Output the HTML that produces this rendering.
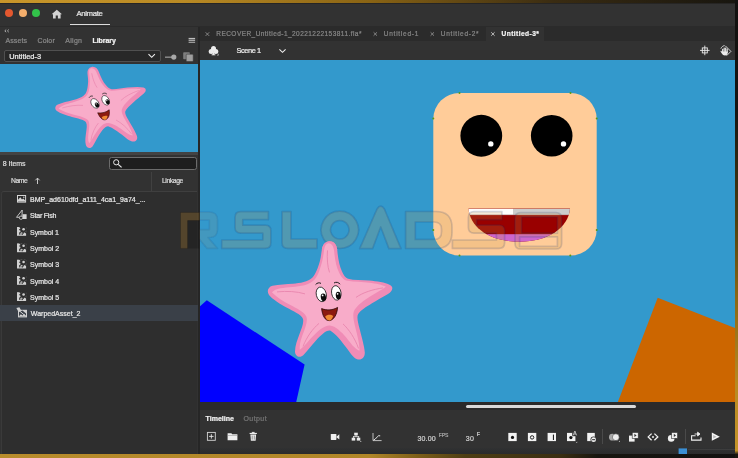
<!DOCTYPE html>
<html>
<head>
<meta charset="utf-8">
<style>
*{margin:0;padding:0;box-sizing:border-box}
html,body{width:738px;height:458px;overflow:hidden;background:#1b1a17}
body{font-family:"Liberation Sans",sans-serif;position:relative}
.abs{position:absolute}
.t{position:absolute;white-space:pre;line-height:1;-webkit-text-stroke:0.22px currentColor}
#txt{left:0;top:0;width:738px;height:458px;will-change:transform}
svg{position:absolute;overflow:visible}
#topband{left:0;top:0;width:738px;height:3px;background:linear-gradient(90deg,#c8962a 0%,#b98a24 25%,#8a6414 50%,#3a2c12 75%,#17150f 100%)}
#botband{left:0;top:454px;width:738px;height:4px;background:linear-gradient(90deg,#b88c2c 0%,#b08628 50%,#7a5c18 57%,#4e3e14 63%,#3a2e12 76%,#17150f 81%,#121110 100%)}
#rightband{left:735px;top:0;width:3px;height:458px;background:linear-gradient(180deg,#121110 0%,#151310 24%,#4e3f10 48%,#8a6716 65%,#b88a22 84%,#c4942a 98.4%,#1a1710 99.2%)}
#titlebar{left:0;top:3px;width:735px;height:24px;background:#323232;border-top:1px solid #262524}
.tl{width:8px;height:8px;border-radius:50%;top:8.5px}
#titleul{left:70px;top:23.6px;width:40px;height:1px;background:#dcdcdc}
#tabline{left:0;top:26px;width:735px;height:1px;background:#2b2b2b}
#tabbar{left:200px;top:27px;width:535px;height:14px;background:#2b2b2b}
#acttab{left:486px;top:27px;width:58px;height:14px;background:#323232}
#scenebar{left:200px;top:41px;width:535px;height:19px;background:#323232}
#stage{left:200px;top:60px;width:535px;height:342px;background:#3399cc;overflow:hidden}
#panel{left:0;top:27px;width:198px;height:427px;background:#323232}
#gap{left:198px;top:27px;width:2px;height:427px;background:#262626}
#dd{left:3.5px;top:50.3px;width:157px;height:11.6px;border:1px solid #505050;border-radius:2px;background:#282828}
#preview{left:0;top:63.7px;width:198px;height:88px;background:#3399cc;overflow:hidden}
#search{left:108.5px;top:157.3px;width:88px;height:12.4px;border:1px solid #6c6c6c;border-radius:2.5px;background:#1e1e1e}
#hdrtop{left:0;top:151.7px;width:198px;height:3.8px;background:#434343}
#hdrdiv{left:151px;top:172px;width:1px;height:19px;background:#414141}
#list{left:1px;top:191px;width:196px;height:263px;background:#2e2e2e;border-top:1px solid #3f3f3f;border-left:1px solid #3a3a3a;border-top-left-radius:3px}
#sel{left:0px;top:305.4px;width:198px;height:15.2px;background:#3a4048}
#tlscroll{left:200px;top:402px;width:535px;height:8.3px;background:#2a2a2a}
#tlthumb{left:466px;top:405.3px;width:170px;height:3.2px;border-radius:2px;background:#d9d9d9}
#timeline{left:200px;top:410.3px;width:535px;height:43.7px;background:#323232}
#tlbot{left:200px;top:447.5px;width:535px;height:6.5px;background:linear-gradient(180deg,#303132,#2a2b2c)}
.vdiv{width:1px;top:428.5px;height:15px;background:#4a4a4a}
</style>
</head>
<body>
<div id="titlebar" class="abs"></div>
<div class="abs tl" style="left:5.4px;background:#e4582f"></div>
<div class="abs tl" style="left:18.8px;background:#f4ae6c"></div>
<div class="abs tl" style="left:31.8px;background:#32c24a"></div>
<div id="titleul" class="abs"></div>
<div id="tabline" class="abs"></div>
<div id="tabbar" class="abs"></div>
<div id="acttab" class="abs"></div>
<div id="scenebar" class="abs"></div>
<div id="stage" class="abs">
<svg class="abs" style="left:0;top:0" width="535" height="342" viewBox="200 60 535 342">
<defs>
<symbol id="star" viewBox="0 0 126 120" overflow="visible">
<path d="M62.4 0.8 C67.5 0.5 70 5 70.3 10 C71 18 72.5 26 75 31 C76.5 34.5 78.5 37.5 81 38.3 C87 40 95 39.5 102 40.2 C110 41 118 42 123 44.5 C127 46.5 125.5 51 121 53.5 C116 56.5 110 59.5 105 62.8 C99 66.5 93.5 70 91.2 73.5 C89.5 76.5 91 82 92.5 88 C94.5 96 97.5 106 97.8 112 C98 118 93.5 120.5 89.5 118.5 C85.5 116.5 83 112 80 108 C75 101.5 69 93.5 63.5 90.3 C59 89.5 54 95 49 100 C45 104 40.5 110.5 36.5 114.5 C33 118 28 116 28 111 C28 105 30.5 99 32.5 93.5 C34.5 88 37 82.5 36 78.5 C34.5 74 26 70.5 19.5 67 C13.5 63.8 5 58.5 2 54.5 C-0.5 51 1 46.5 5.5 45.3 C12 43.8 19.5 43.8 26 43.3 C33 42.8 41 41.8 45.5 37.2 C49 33.5 51 27 52.8 21.2 C54 17 54.3 12 55 8.5 C55.8 4 58.5 1 62.4 0.8 Z" fill="#f08cb6"/>
<path d="M62 3.5 C66 3.5 67.5 8 67.8 12 C68.5 20 70 28 73 33.5 C75 37.5 77.5 40.5 81 41 C88 42.3 96 42 103 43 C109 43.8 116 45 119.5 47 C115 50.5 107 54.5 101 58.5 C95 62.5 89.5 67 87.5 71.5 C86 75.5 87.5 82 89 88 C91 96 93.5 105 93 111 C88 109 84 103 80 98 C75 92 69 86.5 63.5 85.8 C58 85.5 52 91 47 96 C42.5 100.5 38 106.5 33.5 110 C32.5 105 35 98.5 37 93 C39 87.5 41.5 81.5 40 77 C38 72 30 68.5 23.5 65 C17.5 61.8 10 57.5 5.5 52.5 C9 48.5 18 47.8 26 47.2 C34 46.6 43 45.5 48 40 C52 35.5 54 28 55.8 21.5 C57 17 57.3 12 58 8.5 C58.6 5.5 60 3.6 62 3.5 Z" fill="#f8acc9" transform="translate(-0.6 -0.7)"/>
<path d="M60.5 10 C59.8 18 60.5 26 62.5 32" fill="none" stroke="#e986ae" stroke-width="0.9"/>
<path d="M10 51.5 C20 50.5 30 51 38 53.5" fill="none" stroke="#e986ae" stroke-width="0.9"/>
<path d="M116 47.5 C106 49 96 52 89 57" fill="none" stroke="#e986ae" stroke-width="0.9"/>
<path d="M36 106 C40 96 46 88 52 83" fill="none" stroke="#e986ae" stroke-width="0.9"/>
<path d="M91.5 108 C88 98 82 89 76 83.5" fill="none" stroke="#e986ae" stroke-width="0.9"/>
<ellipse cx="54.3" cy="54" rx="5" ry="7.4" fill="#fff" stroke="#1a1a1a" stroke-width="0.8" transform="rotate(-14 54.3 54)"/>
<ellipse cx="69.3" cy="52.5" rx="4.7" ry="7.3" fill="#fff" stroke="#1a1a1a" stroke-width="0.8" transform="rotate(-10 69.3 52.5)"/>
<ellipse cx="56.4" cy="56.8" rx="2.6" ry="3.8" fill="#0a0a0a" transform="rotate(-10 56.4 56.8)"/>
<ellipse cx="71.3" cy="55.2" rx="2.5" ry="3.8" fill="#0a0a0a" transform="rotate(-8 71.3 55.2)"/>
<circle cx="55.6" cy="55" r="0.9" fill="#fff"/>
<circle cx="70.6" cy="53.4" r="0.9" fill="#fff"/>
<path d="M48.6 44.2 C50 42.3 52.5 42 54 43" fill="none" stroke="#1a1a1a" stroke-width="1"/>
<path d="M67 42.6 C69 41.3 71.8 41.8 73 43.8" fill="none" stroke="#1a1a1a" stroke-width="1"/>
<path d="M54.6 68.2 C60 70.3 66 69.8 70.6 67 C70 74 67 79.5 62.5 80.2 C58 80.6 55.4 75 54.6 68.2 Z" fill="#8c1a10" stroke="#2a0806" stroke-width="0.8"/>
<path d="M58.2 76.2 C60 74 64 73.8 66.2 75.6 C65.3 78.3 64 79.9 62.5 80.2 C60.8 80.4 59.2 78.8 58.2 76.2 Z" fill="#ee8a34"/>
</symbol>
</defs>
<polygon points="199,307 206.8,300.3 304.6,364.6 296,403 199,403" fill="#0000ff"/>
<polygon points="657.7,297.8 736,328.3 736,403 617.5,403" fill="#cc6600"/>
<rect x="433.3" y="92.9" width="163.4" height="162.7" rx="26" ry="26" fill="#ffcc99"/>
<circle cx="481.3" cy="135.75" r="20.9" fill="#000"/>
<circle cx="551.7" cy="135.75" r="20.8" fill="#000"/>
<circle cx="490.8" cy="143.9" r="2.7" fill="#fff"/>
<circle cx="563.5" cy="143.9" r="2.7" fill="#fff"/>
<clipPath id="mclip"><path d="M468.5 208.6 H570 C568.5 228 548 241.8 519.2 241.8 C490.4 241.8 470 228 468.5 208.6 Z"/></clipPath>
<g clip-path="url(#mclip)">
<rect x="460" y="205" width="120" height="45" fill="#990000"/>
<rect x="460" y="234.2" width="120" height="12" fill="#cc66cc"/>
<rect x="460" y="208.6" width="53" height="6.4" fill="#ffffff"/>
<rect x="513" y="208.6" width="60" height="6.4" fill="#cccccc"/>
<rect x="460" y="214.2" width="120" height="1" fill="#b89a9a" opacity="0.6"/>
</g>
<g fill="#5c9a10"><circle cx="459.5" cy="92.9" r="1"/><circle cx="570.5" cy="92.9" r="1"/><circle cx="433.3" cy="118.5" r="1"/><circle cx="596.7" cy="118.5" r="1"/><circle cx="433.3" cy="230" r="1"/><circle cx="596.7" cy="230" r="1"/><circle cx="459.5" cy="255.6" r="1"/><circle cx="570.3" cy="255.6" r="1"/></g>
<use href="#star" x="267" y="240.4" width="126" height="120"/>
</svg>
</div>
<div id="panel" class="abs"></div>
<div id="gap" class="abs"></div>
<div id="dd" class="abs"></div>
<div id="preview" class="abs"><svg style="left:0;top:0" width="198" height="87" viewBox="0 0 198 87"><g transform="matrix(0.7293 -0.1399 0.1765 0.6651 45.86 11.10)"><use href="#star" x="0" y="0" width="126" height="120"/></g></svg></div>
<div id="search" class="abs"></div>
<div id="hdrtop" class="abs"></div>
<div id="hdrdiv" class="abs"></div>
<div id="list" class="abs"></div>
<div id="sel" class="abs"></div>
<div id="tlscroll" class="abs"></div>
<div id="tlthumb" class="abs"></div>
<div id="timeline" class="abs"></div>
<div id="tlbot" class="abs"></div>
<div class="abs vdiv" style="left:602px"></div>
<div class="abs vdiv" style="left:685px"></div>
<svg id="wm" style="left:0;top:0" width="738" height="458" viewBox="0 0 738 458">
<defs><filter id="wb" x="-5%" y="-20%" width="110%" height="140%"><feGaussianBlur stdDeviation="0.45"/></filter><clipPath id="cpL"><rect x="0" y="190" width="199.6" height="80"/></clipPath><clipPath id="cpR"><rect x="199.6" y="190" width="540" height="80"/></clipPath>
<g id="wmg" fill-rule="evenodd" stroke-linejoin="round">
<path d="M221.7 240 H262.8 V233.2 H240.6 Q235 233.2 235 227.6 V217.2 Q235 211.6 240.6 211.6 H268.4 V219.6 H242.8 V225.2 H265.3 Q270.9 225.2 270.9 230.8 V242.8 Q270.9 248.4 265.3 248.4 H221.7 Z"/>
<path d="M282 211.6 H291 V239 H317 V248.4 H287.6 Q282 248.4 282 242.8 Z"/>
<path d="M339.8 211.1 A18.7 18.7 0 1 1 339.79 211.1 Z M339.8 220.6 A9.2 9.2 0 1 0 339.81 220.6 Z"/>
<path d="M359.7 248.6 L377 209 Q380.7 203.4 384.4 209 L401 248.6 H388.9 L380.7 227 L372.6 248.6 Z"/>
<path d="M405.6 211.5 H436 Q452 211.5 452 227.5 V232.5 Q452 248.5 436 248.5 H405.6 Z M415.3 222 H434 Q441.5 222 441.5 229 V232 Q441.5 239.4 434 239.4 H415.3 Z"/>
<path d="M452.4 240 H496.4 V233.2 H474 Q468.4 233.2 468.4 227.6 V217.2 Q468.4 211.6 474 211.6 H502 V219.6 H476.6 V225.2 H499 Q504.6 225.2 504.6 230.8 V242.8 Q504.6 248.4 499 248.4 H452.4 Z"/>
<path d="M520.6 212.6 H556 Q561.6 212.6 561.6 218.2 V243.4 Q561.6 249 556 249 H520.6 Q515 249 515 243.4 V218.2 Q515 212.6 520.6 212.6 Z M521.6 217 V233.2 H557.4 V217 Z M519.6 236.8 V246.4 H557.4 V236.8 Z"/>
</g><g id="wmR" fill-rule="evenodd" stroke-linejoin="round"><path d="M180.5 212 H209 Q217.5 212 217.5 220 V229.5 Q217.5 237.5 209.5 237.5 H208 L217.5 248.4 H207 L198 237.5 H188.6 V248.4 H180.5 Z M188.6 220 H209.4 V229.6 H188.6 Z"/></g></defs>
<g clip-path="url(#cpL)"><path d="M180.5 212.4 H199.6 V220.6 H187.6 V248.4 H180.5 Z" fill="rgba(200,140,40,0.25)" stroke="rgba(0,0,0,0.2)" stroke-width="0.8"/><path d="M187.6 220.6 H199.6 V248.4 H187.6 Z" fill="rgba(0,0,0,0.2)"/></g>
<g clip-path="url(#cpR)" filter="url(#wb)"><use href="#wmg" fill="rgba(198,148,72,0.2)" stroke="rgba(10,50,110,0.17)" stroke-width="1.7"/><use href="#wmR" fill="rgba(198,148,72,0.11)" stroke="rgba(10,50,110,0.1)" stroke-width="1.7"/></g>
<clipPath id="cpT"><rect x="300" y="238" width="60" height="12"/></clipPath><g clip-path="url(#cpT)"><use href="#star" x="267" y="240.4" width="126" height="120"/></g>
</svg>

<svg id="icons" style="left:0;top:0" width="738" height="458" viewBox="0 0 738 458">
<!-- home -->
<path d="M56.8 9.8 L62 14.3 L60.6 14.3 L60.6 18.5 L57.9 18.5 L57.9 15.6 L55.7 15.6 L55.7 18.5 L53 18.5 L53 14.3 L51.6 14.3 Z" fill="#d2d2d2"/>
<!-- collapse chevrons -->
<path d="M6.2 29.6 L4.8 30.9 L6.2 32.2 M8.8 29.6 L7.4 30.9 L8.8 32.2" fill="none" stroke="#b4b4b4" stroke-width="0.9"/>
<!-- hamburger -->
<rect x="188.6" y="37.9" width="6.5" height="1.5" fill="#bdbdbd"/><rect x="188.6" y="40" width="6.5" height="1.2" fill="#a5a5a5"/><rect x="188.6" y="41.9" width="6.5" height="1" fill="#a5a5a5"/>
<!-- dropdown chevron -->
<path d="M148.5 54.2 L151.7 57.3 L154.9 54.2" fill="none" stroke="#f0f0f0" stroke-width="1.1"/>
<!-- pin -->
<rect x="165" y="56.6" width="7" height="1.1" fill="#a8a8a8"/><circle cx="173.8" cy="57.1" r="2.6" fill="#a8a8a8"/>
<!-- copy -->
<rect x="183.2" y="52.3" width="6.6" height="7" rx="0.8" fill="#7e7e7e"/><rect x="186.2" y="54.2" width="7" height="7.3" rx="0.8" fill="#9e9e9e" stroke="#323232" stroke-width="0.5"/>
<!-- search magnifier -->
<circle cx="116.2" cy="162.3" r="2.6" fill="none" stroke="#e8e8e8" stroke-width="1"/><path d="M118.2 164.4 L121.6 167.4" stroke="#e8e8e8" stroke-width="1.2" fill="none"/>
<!-- sort arrow -->
<path d="M37.5 184 L37.5 178.3 M35.4 180.3 L37.5 178.1 L39.6 180.3" fill="none" stroke="#d8d8d8" stroke-width="0.9"/>
<!-- list icons -->
<g id="bmpic"><rect x="17" y="195" width="9.1" height="7.6" fill="#d4d4d4"/><rect x="18" y="196" width="7.1" height="5.6" fill="#2a2a2a"/><path d="M18 201.6 L18 199.8 L20.3 197.3 L22 199.6 L23.3 198.6 L25.1 200.4 L25.1 201.6 Z" fill="#d4d4d4"/><circle cx="23.8" cy="197.2" r="0.7" fill="#d4d4d4"/></g>
<g id="gfxic"><path d="M22.2 210 L16.5 217.3 L22 217.3 Z" fill="none" stroke="#d4d4d4" stroke-width="0.9"/><rect x="22.6" y="214.2" width="4" height="4.8" fill="#d4d4d4"/><circle cx="21" cy="217.7" r="1.7" fill="#2e2e2e" stroke="#d4d4d4" stroke-width="0.8"/></g>
<g id="symic"><rect x="17" y="227" width="9.1" height="8.8" fill="#d0d0d0"/><circle cx="23.2" cy="229.6" r="3.1" fill="#2e2e2e"/><path d="M19.5 226.5 L26.8 233.5 M26.6 226.3 L20.2 232.6 M23.2 225.6 L23.2 233.8 M19.2 229.6 L27.2 229.6" stroke="#2e2e2e" stroke-width="1.1"/><circle cx="23.6" cy="229.3" r="1.3" fill="#d0d0d0"/><rect x="19.2" y="232.3" width="1.2" height="2.4" fill="#2e2e2e"/><rect x="21.6" y="233.3" width="1.2" height="1.6" fill="#2e2e2e"/></g>
<use href="#symic" y="16.4"/><use href="#symic" y="32.7"/><use href="#symic" y="49"/><use href="#symic" y="65.2"/>
<g id="warpic"><rect x="18" y="309.8" width="9" height="7.6" fill="#d0d0d0"/><path d="M19 316.2 L19 312 L22.5 310.6 L26 313.4 L26 316.2 Z" fill="#3a4048"/><path d="M19 316.3 L20.8 314.2 L22.6 315.4 L24.4 314 L26 316.3 Z" fill="#d0d0d0"/><path d="M16.4 308 L19.4 307.2 L21.2 310.6 L18.4 311.8 Z" fill="#d0d0d0"/><path d="M19.6 311 L26 316.4" stroke="#d0d0d0" stroke-width="1"/></g>
<!-- tab x's -->
<g stroke="#9a9a9a" stroke-width="0.8" fill="none"><path d="M205.6 32.3 L209.2 35.9 M209.2 32.3 L205.6 35.9"/><path d="M373.6 32.3 L377 35.7 M377 32.3 L373.6 35.7"/><path d="M430.6 32.3 L434 35.7 M434 32.3 L430.6 35.7"/></g>
<path d="M491.2 32.3 L494.6 35.7 M494.6 32.3 L491.2 35.7" stroke="#dcdcdc" stroke-width="0.8" fill="none"/>
<!-- club / scene icon -->
<g fill="#ececec"><circle cx="213.5" cy="48.6" r="2.5"/><circle cx="211.2" cy="51.6" r="2.5"/><circle cx="215.8" cy="51.6" r="2.5"/><path d="M213.5 50 L214.6 55 L212.4 55 Z"/><rect x="211.6" y="54.4" width="3.8" height="0.9"/><path d="M218.6 53.6 L218.6 55.4 L216.8 55.4 Z" fill="#bbb"/></g>
<!-- scene chevron -->
<path d="M279.4 49.3 L282.5 52.3 L285.6 49.3" fill="none" stroke="#ececec" stroke-width="1.1"/>
<!-- crosshair -->
<g stroke="#ececec" stroke-width="0.9" fill="none"><rect x="702.3" y="47.9" width="5" height="5"/><path d="M704.8 45.6 L704.8 55.2 M700 50.4 L709.6 50.4"/></g>
<!-- rotate-hand -->
<g><path d="M725.4 45.9 L730.9 51.4 L726.6 55.7" fill="none" stroke="#e6e6e6" stroke-width="0.9"/><path d="M720.9 48.6 C721.6 46.8 723 45.8 724.6 45.6" fill="none" stroke="#e6e6e6" stroke-width="0.9"/><g fill="#ececec"><rect x="722.1" y="48.7" width="1.15" height="4" rx="0.5"/><rect x="723.6" y="47.6" width="1.15" height="5" rx="0.5"/><rect x="725.1" y="47.5" width="1.15" height="5" rx="0.5"/><rect x="726.6" y="48.4" width="1.15" height="4.4" rx="0.5"/><path d="M722.1 51.4 H727.75 V52.6 C727.75 54.4 726.6 55.6 725 55.6 C723.4 55.6 722.6 54.8 721.8 53.6 L720.5 51.4 C720.3 50.8 721 50.4 721.4 50.9 L722.1 51.8 Z"/></g></g>
<!-- timeline left icons -->
<rect x="207.4" y="432.4" width="7.9" height="7.9" fill="none" stroke="#d6d6d6" stroke-width="0.9"/><path d="M211.35 434.2 L211.35 438.6 M209.1 436.4 L213.6 436.4" stroke="#e6e6e6" stroke-width="0.9"/>
<path d="M227.6 433.2 L231.4 433.2 L232.2 434.3 L237.4 434.3 L237.4 440.2 L227.6 440.2 Z" fill="#f0f0f0"/><rect x="227.6" y="435.1" width="9.8" height="0.5" fill="#8a8a8a"/>
<g fill="#ececec"><rect x="251.8" y="431.9" width="2.8" height="1"/><rect x="249.6" y="432.9" width="7.3" height="1.1"/><path d="M250.4 434.6 L256.1 434.6 L255.6 440.7 L250.9 440.7 Z"/></g><path d="M252.2 435.6 L252.2 439.6 M254.3 435.6 L254.3 439.6" stroke="#555" stroke-width="0.6"/>
<!-- camera, hierarchy, graph -->
<rect x="330.8" y="433.9" width="5.6" height="6" rx="0.6" fill="#f0f0f0"/><path d="M336.2 436.9 L339.3 434.3 L339.3 439.5 Z" fill="#f0f0f0"/>
<g fill="#ececec"><rect x="354.2" y="432.7" width="3.6" height="2.7"/><rect x="351.7" y="437.7" width="3.5" height="2.9"/><rect x="356.8" y="437.7" width="3.5" height="2.9"/><rect x="355.6" y="435.2" width="0.9" height="1.5"/><rect x="353" y="436.3" width="6.1" height="0.8"/><rect x="353" y="436.3" width="0.8" height="1.6"/><rect x="358.3" y="436.3" width="0.8" height="1.6"/><circle cx="360.8" cy="441.6" r="0.5"/></g>
<path d="M373 433 L373 440.6 L381.6 440.6" fill="none" stroke="#cfcfcf" stroke-width="0.9"/><path d="M373.6 440 C376 439.2 377 436.6 378.4 435.8 L380.2 435.8" fill="none" stroke="#e8e8e8" stroke-width="1"/>
<!-- keyframe icons -->
<g fill="#f2f2f2"><rect x="508.3" y="432.9" width="8.4" height="8.2"/><rect x="527.9" y="432.9" width="8.4" height="8.2"/><rect x="547.6" y="432.9" width="8.4" height="8.2"/><rect x="567" y="432.9" width="8.4" height="8.2"/><rect x="587.2" y="432.9" width="7.6" height="8.2"/></g>
<circle cx="512.5" cy="437.4" r="1.6" fill="#111"/>
<circle cx="532.1" cy="437.4" r="1.7" fill="none" stroke="#222" stroke-width="1"/>
<rect x="552.9" y="434.6" width="1.1" height="5.4" fill="#222"/>
<circle cx="570.9" cy="437.6" r="1.6" fill="#111"/>
<path d="M572.2 432.6 L577.6 432.6 L577.6 436.2 L572.2 436.2 Z" fill="#323232"/><path d="M573.2 435.4 L574.9 431 L576.6 435.4 M573.8 434 L576 434" fill="none" stroke="#e8e8e8" stroke-width="0.7"/>
<path d="M577.2 441.6 L577.2 443 L575.8 443 Z" fill="#bbb"/>
<circle cx="593.6" cy="439.7" r="3.1" fill="#323232"/><circle cx="593.6" cy="439.7" r="2.4" fill="#f2f2f2"/><rect x="592.1" y="439.2" width="3" height="1" fill="#222"/>
<!-- onion etc -->
<circle cx="612.4" cy="437.2" r="3.4" fill="#a8a8a8"/><circle cx="615.8" cy="437.2" r="3.4" fill="#ededed" stroke="#323232" stroke-width="0.5"/><path d="M620 440.6 L620 442 L618.6 442 Z" fill="#bbb"/>
<rect x="629" y="435.6" width="5.6" height="6" fill="#f0f0f0"/><rect x="632.2" y="432.5" width="6" height="5.8" fill="#f0f0f0" stroke="#323232" stroke-width="0.6"/><path d="M634.4 433.8 L636.6 435.4 L634.4 437 Z" fill="#323232"/>
<path d="M651.6 433.6 L648.2 436.9 L651.6 440.2 M654.4 433.6 L657.8 436.9 L654.4 440.2" fill="none" stroke="#f0f0f0" stroke-width="1.3"/><circle cx="653" cy="436.9" r="1" fill="#f0f0f0"/>
<circle cx="671.2" cy="438.4" r="3.3" fill="#f0f0f0"/><rect x="671.6" y="432.5" width="5.9" height="5.8" fill="#f0f0f0" stroke="#323232" stroke-width="0.6"/><path d="M673.8 433.8 L676 435.4 L673.8 437 Z" fill="#323232"/>
<path d="M695.6 435.8 L691.6 435.8 L691.6 440.1 L701 440.1 L701 437.4" fill="none" stroke="#f0f0f0" stroke-width="1.1"/><path d="M694.6 434 L698.4 434 M697.6 432.2 L700 434 L697.6 435.9 Z" fill="#f0f0f0" stroke="#f0f0f0" stroke-width="0.9"/>
<path d="M711.8 432.6 L719.8 436.7 L711.8 440.8 Z" fill="#f4f4f4"/><path d="M713.2 435 L716.6 436.7 L713.2 438.4 Z" fill="#b8b8b8"/>
<!-- playhead marker & ruler line -->
<rect x="678.6" y="448.4" width="8.4" height="5.8" fill="#3b8fd4"/>
<rect x="688" y="449" width="47" height="0.6" fill="#464646"/>
</svg>

<div id="txt" class="abs">
<div class="t" style="left:76.4px;top:10.10px;font-size:7.8px;color:#e4e4e4;letter-spacing:-0.37px">Animate</div>
<div class="t" style="left:5.5px;top:37.10px;font-size:7px;color:#8a8a8a;letter-spacing:0.10px">Assets</div>
<div class="t" style="left:37.5px;top:37.10px;font-size:7px;color:#8a8a8a;letter-spacing:0.12px">Color</div>
<div class="t" style="left:65.3px;top:37.10px;font-size:7px;color:#8a8a8a;letter-spacing:0.28px">Align</div>
<div class="t" style="left:92.5px;top:37.10px;font-size:7px;color:#f2f2f2;letter-spacing:-0.07px;font-weight:bold">Library</div>
<div class="t" style="left:9.2px;top:52.70px;font-size:7.4px;color:#f0f0f0;letter-spacing:0.02px">Untitled-3</div>
<div class="t" style="left:2.8px;top:160.10px;font-size:7px;color:#dcdcdc;letter-spacing:-0.03px">8 Items</div>
<div class="t" style="left:11.1px;top:177.80px;font-size:6.8px;color:#d8d8d8;letter-spacing:-0.48px">Name</div>
<div class="t" style="left:162.0px;top:177.80px;font-size:6.8px;color:#d8d8d8;letter-spacing:-0.42px">Linkage</div>
<div class="t" style="left:30.0px;top:195.80px;font-size:7px;color:#e6e6e6;letter-spacing:0.02px">BMP_ad610dfd_a111_4ca1_9a74_...</div>
<div class="t" style="left:30.0px;top:212.30px;font-size:7px;color:#e6e6e6;letter-spacing:-0.21px">Star Fish</div>
<div class="t" style="left:30.0px;top:228.60px;font-size:7px;color:#e6e6e6;letter-spacing:-0.04px">Symbol 1</div>
<div class="t" style="left:30.0px;top:245.00px;font-size:7px;color:#e6e6e6;letter-spacing:0.00px">Symbol 2</div>
<div class="t" style="left:30.0px;top:261.30px;font-size:7px;color:#e6e6e6;letter-spacing:0.00px">Symbol 3</div>
<div class="t" style="left:30.0px;top:277.60px;font-size:7px;color:#e6e6e6;letter-spacing:0.00px">Symbol 4</div>
<div class="t" style="left:30.0px;top:293.80px;font-size:7px;color:#e6e6e6;letter-spacing:0.00px">Symbol 5</div>
<div class="t" style="left:30.8px;top:309.70px;font-size:7px;color:#e6e6e6;letter-spacing:0.01px">WarpedAsset_2</div>
<div class="t" style="left:216.3px;top:30.75px;font-size:6.5px;color:#868686;letter-spacing:0.45px">RECOVER_Untitled-1_20221222153811.fla*</div>
<div class="t" style="left:383.8px;top:30.75px;font-size:6.5px;color:#868686;letter-spacing:0.74px">Untitled-1</div>
<div class="t" style="left:440.8px;top:30.75px;font-size:6.5px;color:#868686;letter-spacing:0.75px">Untitled-2*</div>
<div class="t" style="left:501.5px;top:30.70px;font-size:6.6px;color:#f4f4f4;letter-spacing:0.44px;font-weight:bold">Untitled-3*</div>
<div class="t" style="left:236.6px;top:47.00px;font-size:7.4px;color:#eeeeee;letter-spacing:-0.45px">Scene 1</div>
<div class="t" style="left:205.6px;top:415.40px;font-size:7px;color:#f2f2f2;letter-spacing:-0.01px;font-weight:bold">Timeline</div>
<div class="t" style="left:243.5px;top:415.40px;font-size:7px;color:#767676;letter-spacing:0.42px">Output</div>
<div class="t" style="left:417.4px;top:435.30px;font-size:7px;color:#cfcfcf;letter-spacing:0.17px">30.00</div>
<div class="t" style="left:438.7px;top:432.50px;font-size:5px;color:#a8a8a8;letter-spacing:-0.02px">FPS</div>
<div class="t" style="left:465.7px;top:435.30px;font-size:7px;color:#cfcfcf;letter-spacing:0.50px">30</div>
<div class="t" style="left:476.8px;top:432.30px;font-size:5.4px;color:#d0d0d0;letter-spacing:-0.40px">F</div>

</div>
<div id="topband" class="abs"></div>
<div id="botband" class="abs"></div>
<div id="rightband" class="abs"></div>
</body>
</html>
